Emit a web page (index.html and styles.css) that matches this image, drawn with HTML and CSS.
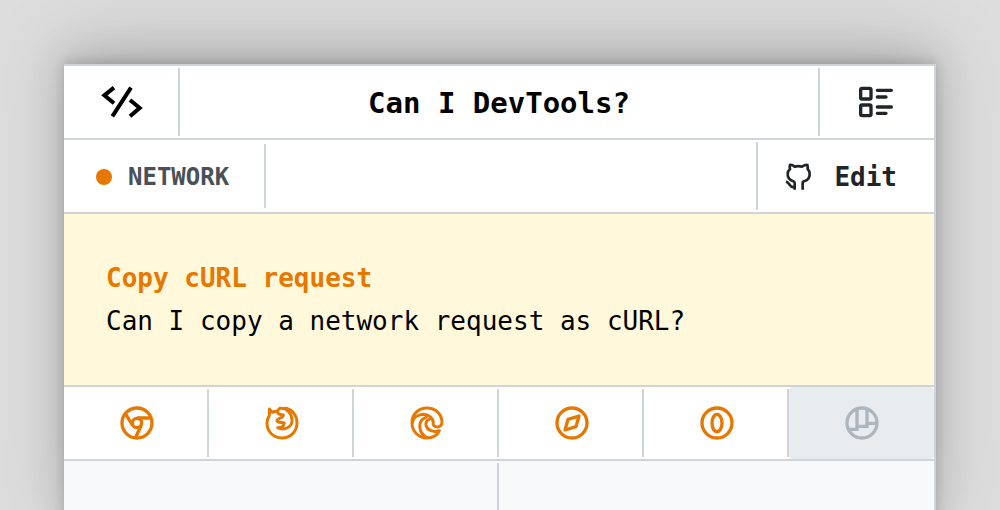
FILE: index.html
```
<!DOCTYPE html>
<html lang="en">
<head>
<meta charset="utf-8">
<title>Can I DevTools?</title>
<link rel="stylesheet" href="styles.css">
</head>
<body>
<main class="card">
  <header class="row">
    <a class="cell cell-side home" href="#" aria-label="Home">
      <svg class="icon-large" viewBox="141 84 144 144" stroke-width="12"><path d="M192 113 163 136 192 160M243 113 187 199M240 150 269 174 240 199"/></svg>
    </a>
    <h1 class="cell title">Can I DevTools?</h1>
    <button class="cell menu" type="button" aria-label="Feature list">
      <svg class="icon-large round" viewBox="339 84 144 144" stroke-width="10"><rect x="362" y="115" width="31" height="32" rx="4"/><rect x="362" y="165" width="31" height="32" rx="4"/><path d="M412 121H454M412 141H438M412 171H454M412 190H438"/></svg>
    </button>
  </header>
  <div class="row">
    <div class="cell category"><span class="dot"></span>NETWORK</div>
    <div class="cell spacer"></div>
    <a class="cell edit" href="#">
      <svg class="icon-small" viewBox="124 330 96 96" stroke-width="8"><path d="M162 416V396Q162 392 156 390C144 386 141 378 141 369C141 362 143 358 148 354Q146 347 148 342Q155 341 162 347Q173 344 184 347Q193 341 200 342Q202 348 201 354C206 359 207 363 207 369C207 380 203 387 192 390Q186 391 186 396V416M162 408C146 412 149 395 136 392"/></svg>
      Edit
    </a>
  </div>
  <section class="feature">
    <h2 class="feature-title">Copy cURL request</h2>
    <p class="feature-text">Can I copy a network request as cURL?</p>
  </section>
  <nav class="row browsers" aria-label="Browsers">
    <a class="cell" href="#" aria-label="Chrome"><svg class="icon" viewBox="21 24 120 120" stroke-width="10"><circle cx="81" cy="84" r="45"/><circle cx="81" cy="84" r="14"/><path d="M81 69H122M68 91 46 56M94 91 77 127"/></svg></a>
    <a class="cell" href="#" aria-label="Firefox"><svg class="icon round" viewBox="21 24 120 120" stroke-width="9"><path d="M43 42 43 61C38 69 36 77 36 85C36 110 56 129 81 129C107 129 126 109 126 84C126 58 108 40 88 40Q82 42 76 39Q70 43 67 50Q57 48 52 52L43 42M67 50C68 57 74 59 85 60C84 70 66 69 66 78C71 86 80 80 88 84C86 94 79 99 68 98C88 108 112 96 111 76C111 63 104 51 92 43"/></svg></a>
    <a class="cell" href="#" aria-label="Edge"><svg class="icon round" viewBox="21 24 120 120" stroke-width="9"><path d="M100 83C93 96 126 104 126 82C125 56 106 39 81 39C54 39 36 59 36 84C36 110 57 129 81 129C98 129 111 123 118 107C98 114 80 104 78 90C77 81 82 75 88 73M100 83C99 68 85 58 70 58C51 59 39 70 37 84M78 67C52 76 53 114 82 128"/></svg></a>
    <a class="cell" href="#" aria-label="Safari"><svg class="icon round" viewBox="21 24 120 120" stroke-width="10"><circle cx="81" cy="84" r="45"/><path d="M102 63 69 73 60 105 93 95Z"/></svg></a>
    <a class="cell" href="#" aria-label="Opera"><svg class="icon" viewBox="21 24 120 120" stroke-width="10"><circle cx="81" cy="84" r="45"/><ellipse cx="81" cy="84" rx="15" ry="26"/></svg></a>
    <a class="cell unsupported" href="#" aria-label="Polypane"><svg class="icon" viewBox="216 84 120 120" stroke-width="10"><circle cx="276" cy="144" r="45"/><path d="M261 101V163H235M261 154H291V101M291 145H322"/></svg></a>
  </nav>
  <div class="row panels">
    <div class="cell"></div>
    <div class="cell"></div>
  </div>
</main>
</body>
</html>
```
FILE: styles.css
```
* {
  box-sizing: border-box;
}

body {
  margin: 0;
  padding: 64px 64px 0;
  min-height: 100vh;
  overflow: hidden;
  background: #dddddd;
  color: #000;
  font-family: "DejaVu Sans Mono", monospace;
  font-size: 26px;
}

.card {
  border-top: 2px solid #ced4da;
  border-right: 2px solid #ced4da;
  background: #fff;
  box-shadow:
    0 -2px 10px rgba(0, 0, 0, 0.14),
    0 -8px 36px rgba(0, 0, 0, 0.16),
    0 -24px 80px rgba(0, 0, 0, 0.12);
}

.row {
  display: flex;
  min-height: 74px;
  padding: 2px 0;
  border-bottom: 2px solid #ced4da;
}

.cell {
  display: flex;
  align-items: center;
  justify-content: center;
  margin: 0;
  border: 0 solid #ced4da;
  border-right-width: 2px;
  background: none;
  color: inherit;
  font: inherit;
  text-decoration: none;
}

.cell:last-child {
  border-right-width: 0;
}

.cell-side {
  width: 116px;
}

.row .title {
  flex: 1;
  padding-top: 2px;
  font-size: 29px;
  font-weight: bold;
}

.row .menu {
  width: 114px;
  padding: 0;
  color: #212529;
}

.row .category {
  gap: 16px;
  margin: 2px 0;
  padding: 2px 35px 0 32px;
  color: #495057;
  font-size: 24px;
  font-weight: bold;
}

.dot {
  width: 16px;
  height: 16px;
  border-radius: 50%;
  background: #e67700;
}

.spacer {
  flex: 1;
}

.row .edit {
  gap: 20px;
  padding: 2px 37px 0 24px;
  color: #212529;
  font-weight: bold;
}

svg {
  display: block;
  fill: none;
  stroke: currentColor;
}

.round {
  stroke-linecap: round;
  stroke-linejoin: round;
}

.icon {
  width: 40px;
  height: 40px;
}

.icon-large {
  width: 48px;
  height: 48px;
}

.icon-small {
  width: 32px;
  height: 32px;
}

.feature {
  padding: 43px 42px 42px;
  border-bottom: 2px solid #ced4da;
  background: #fff8db;
  line-height: 43px;
}

.feature-title {
  margin: 0;
  color: #e67700;
  font-size: 26px;
}

.feature-text {
  margin: 0;
}

.browsers,
.panels {
  display: grid;
  grid-template-columns: repeat(6, 1fr);
}

.panels {
  grid-template-columns: repeat(2, 1fr);
  background: #f8f9fa;
}

.browsers {
  color: #e67700;
}

.browsers .cell {
  padding-left: 2px;
}

.browsers .unsupported {
  margin: -2px 0;
  padding-left: 0;
  border-radius: 4px;
  background: #e9ecef;
  color: #adb5bd;
}
```
